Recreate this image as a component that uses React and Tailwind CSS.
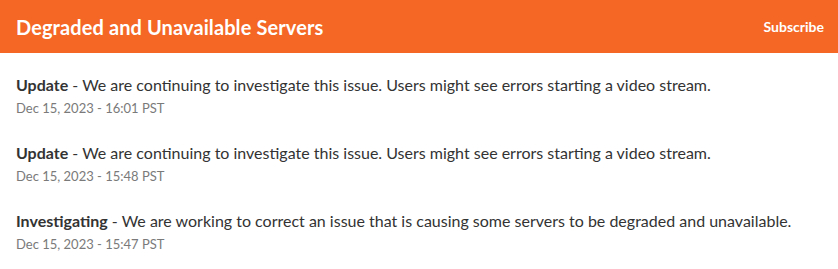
export default function App() {
  const rows = [
    { kind: "Update", msg: "We are continuing to investigate this issue. Users might see errors starting a video stream.", date: "Dec 15, 2023 - 16:01 PST" },
    { kind: "Update", msg: "We are continuing to investigate this issue. Users might see errors starting a video stream.", date: "Dec 15, 2023 - 15:48 PST" },
    { kind: "Investigating", msg: "We are working to correct an issue that is causing some servers to be degraded and unavailable.", date: "Dec 15, 2023 - 15:47 PST" },
  ];
  return (
    <div className="w-[838px] h-[269px] bg-white font-['Lato',sans-serif]">
      <div className="h-[53px] bg-[#f46725] flex items-center justify-between pl-4 pr-[14px]">
        <h1 className="text-white font-bold text-[20px] tracking-[0.1px]">Degraded and Unavailable Servers</h1>
        <span className="text-white font-bold text-[14px]">Subscribe</span>
      </div>
      <div className="pt-[9px] px-4">
        {rows.map((r, i) => (
          <div key={i} className="py-3">
            <div className="text-[16px] leading-[22px] text-[#333333]">
              <strong className="font-bold">{r.kind}</strong> - {r.msg}
            </div>
            <div className="mt-[2px] text-[13px] leading-[20px] text-[#7a7a7a]">{r.date}</div>
          </div>
        ))}
      </div>
    </div>
  );
}
